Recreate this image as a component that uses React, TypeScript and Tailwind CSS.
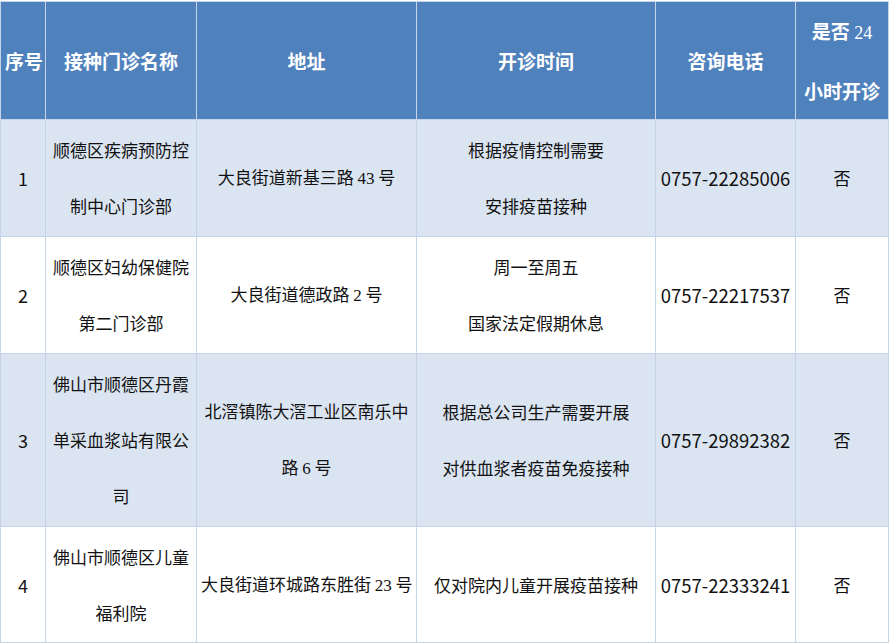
import React from 'react';

const cjk = '"Noto Sans CJK SC", "Noto Sans", sans-serif';

const Num: React.FC<{ children: React.ReactNode }> = ({ children }) => (
  <span style={{ fontFamily: '"Liberation Serif", serif' }}>{children}</span>
);

type Row = {
  no: string;
  name: React.ReactNode;
  addr: React.ReactNode;
  time: React.ReactNode;
  tel: string;
  open: string;
  h: string;
  bg: string;
};

const rows: Row[] = [
  {
    no: '1',
    name: <>顺德区疾病预防控<br />制中心门诊部</>,
    addr: <>大良街道新基三路 <Num>43</Num> 号</>,
    time: <>根据疫情控制需要<br />安排疫苗接种</>,
    tel: '0757-22285006',
    open: '否',
    h: 'h-[117px]',
    bg: 'bg-[#dbe5f1]',
  },
  {
    no: '2',
    name: <>顺德区妇幼保健院<br />第二门诊部</>,
    addr: <>大良街道德政路 <Num>2</Num> 号</>,
    time: <>周一至周五<br />国家法定假期休息</>,
    tel: '0757-22217537',
    open: '否',
    h: 'h-[117px]',
    bg: 'bg-white',
  },
  {
    no: '3',
    name: <>佛山市顺德区丹霞<br />单采血浆站有限公<br />司</>,
    addr: <>北滘镇陈大滘工业区南乐中<br />路 <Num>6</Num> 号</>,
    time: <>根据总公司生产需要开展<br />对供血浆者疫苗免疫接种</>,
    tel: '0757-29892382',
    open: '否',
    h: 'h-[173px]',
    bg: 'bg-[#dbe5f1]',
  },
  {
    no: '4',
    name: <>佛山市顺德区儿童<br />福利院</>,
    addr: <>大良街道环城路东胜街 <Num>23</Num> 号</>,
    time: <>仅对院内儿童开展疫苗接种</>,
    tel: '0757-22333241',
    open: '否',
    h: 'h-[116px]',
    bg: 'bg-white',
  },
];

const th = 'border border-[#c6d4e8] px-1 text-center align-middle font-bold text-white text-[19px] leading-[57px] whitespace-nowrap';
const td = 'border border-[#c6d4e8] px-1 text-center align-middle text-[17px] leading-[56px] text-[#111]';

export default function App() {
  return (
    <div className="w-[890px] h-[644px] bg-white pt-px" style={{ fontFamily: cjk }}>
      <table className="table-fixed border-collapse w-[888px]">
        <colgroup>
          <col className="w-[45px]" />
          <col className="w-[151px]" />
          <col className="w-[220px]" />
          <col className="w-[239px]" />
          <col className="w-[140px]" />
          <col className="w-[93px]" />
        </colgroup>
        <thead>
          <tr className="h-[117px] bg-[#4f81bd]">
            <th className={th + ' px-0'}>序号</th>
            <th className={th}>接种门诊名称</th>
            <th className={th}>地址</th>
            <th className={th}>开诊时间</th>
            <th className={th}>咨询电话</th>
            <th className={th}>
              是否 <span className="font-normal text-[18px]" style={{ fontFamily: '"Liberation Serif", serif' }}>24</span>
              <br />
              小时开诊
            </th>
          </tr>
        </thead>
        <tbody>
          {rows.map((r) => (
            <tr key={r.no} className={`${r.h} ${r.bg}`}>
              <td className={td + ' text-[18px]'}>{r.no}</td>
              <td className={td}>{r.name}</td>
              <td className={td + ' whitespace-nowrap'}>{r.addr}</td>
              <td className={td + ' whitespace-nowrap'}>{r.time}</td>
              <td className={td + ' text-[18.5px] whitespace-nowrap px-0'}>{r.tel}</td>
              <td className={td}>{r.open}</td>
            </tr>
          ))}
        </tbody>
      </table>
    </div>
  );
}
